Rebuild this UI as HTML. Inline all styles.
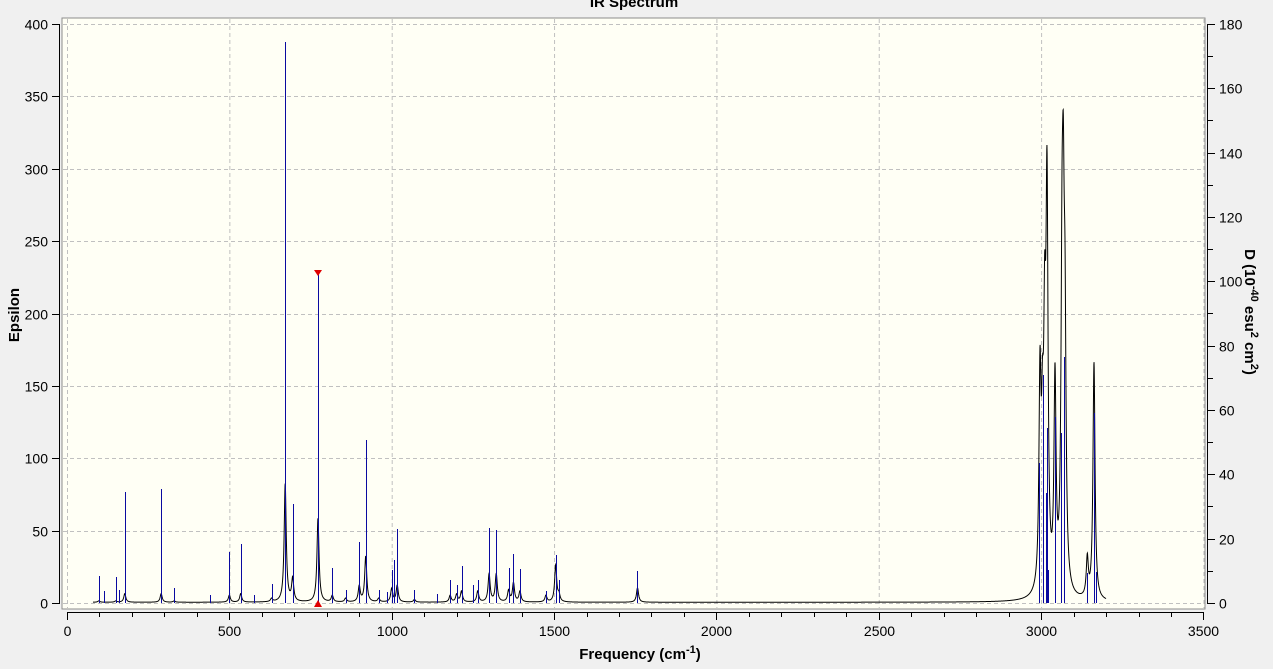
<!DOCTYPE html>
<html><head><meta charset="utf-8"><style>
html,body{margin:0;padding:0;background:#f0f0f0;width:1273px;height:669px;overflow:hidden}
svg{display:block}
text{font-family:"Liberation Sans",sans-serif;fill:#000}
</style></head><body>
<svg id="s" width="1273" height="669" xmlns="http://www.w3.org/2000/svg">
<rect x="62" y="18" width="1143" height="591" fill="#fffff5" stroke="#8c8c8c" stroke-width="1"/>
<g id="grid" stroke="#c0c0c0" stroke-dasharray="4,3" stroke-width="1"></g>
<g id="axes" stroke="#000" stroke-width="1"></g>
<g id="lbl" font-size="14"></g>
<path id="curve" fill="none" stroke="#000" stroke-width="1"/>
<g id="sticks" stroke="#0a0aa0" stroke-width="1"></g>
<polygon points="314,270 322,270 318,276" fill="#e00000"/>
<polygon points="314,607 322,607 318,600" fill="#e00000"/>
<text x="634" y="7" font-size="15" font-weight="bold" text-anchor="middle">IR Spectrum</text>
<text x="640" y="659" font-size="15" font-weight="bold" text-anchor="middle">Frequency (cm<tspan dy="-6" font-size="11">-1</tspan><tspan dy="6">)</tspan></text>
<text transform="translate(19,315) rotate(-90)" font-size="15" font-weight="bold" text-anchor="middle">Epsilon</text>
<text transform="translate(1245,312) rotate(90)" font-size="15" font-weight="bold" text-anchor="middle">D (10<tspan dy="-6" font-size="11">-40</tspan><tspan dy="6"> esu</tspan><tspan dy="-6" font-size="11">2</tspan><tspan dy="6"> cm</tspan><tspan dy="-6" font-size="11">2</tspan><tspan dy="6">)</tspan></text>
</svg>
<script>
var NS="http://www.w3.org/2000/svg";
function X(f){return 67+f*0.3247;}
function F(x){return (x-67)/0.3247;}
function Y(e){return 603-e*1.4475;}
function el(p,t,a,txt){var e=document.createElementNS(NS,t);for(var k in a)e.setAttribute(k,a[k]);if(txt!=null)e.textContent=txt;document.getElementById(p).appendChild(e);return e;}
for(var f=0;f<=3500;f+=500){var x=X(f)+0.5;el("grid","line",{x1:x,y1:19,x2:x,y2:608});}
for(var v=0;v<=400;v+=50){var y=Math.round(Y(v))+0.5;el("grid","line",{x1:63,y1:y,x2:1204,y2:y});}
el("axes","line",{x1:59.5,y1:24,x2:59.5,y2:604});
for(var v=0;v<=400;v+=50){var y=Math.round(Y(v))+0.5;el("axes","line",{x1:52,y1:y,x2:60,y2:y});el("lbl","text",{x:48,y:y+5,"text-anchor":"end"},String(v));}
el("axes","line",{x1:67,y1:612.5,x2:1204,y2:612.5});
for(var f=0;f<=3500;f+=100){var x=Math.round(X(f))+0.5;el("axes","line",{x1:x,y1:612,x2:x,y2:(f%500==0?620:617)});if(f%500==0)el("lbl","text",{x:x,y:636,"text-anchor":"middle"},String(f));}
el("axes","line",{x1:1207.5,y1:24,x2:1207.5,y2:604});
for(var d=0;d<=180;d+=10){var y=Math.round(603-d*3.217)+0.5;el("axes","line",{x1:1207,y1:y,x2:(d%20==0?1215:1213),y2:y});if(d%20==0)el("lbl","text",{x:1219,y:y+5},String(d));}
var st=[[98,576],[115,591],[150,577],[160,590],[178,492],[290,489],[330,588],[440,595],[500,552],[535,544],[575,595],[630,584],[672,42],[695,504],[773,272],[817,568],[858,590],[900,542],[920,440],[960,590],[985,592],[1000,570],[1008,560],[1017,529],[1070,590],[1140,594],[1180,580],[1200,585],[1215,566],[1250,585],[1265,580],[1300,528],[1322,530],[1360,568],[1375,554],[1395,569],[1475,591],[1505,555],[1515,580],[1757,571]];
var px=[[1039,463],[1043,375],[1046.3,493],[1047,428],[1048,570],[1055.3,417],[1060.7,433],[1064.3,357],[1087.3,573],[1094,413],[1096,572]];
px.forEach(function(p){st.push([F(p[0]),p[1]]);});
st.forEach(function(s){var x=Math.round(X(s[0]))+0.5;el("sticks","line",{x1:x,y1:s[1],x2:x,y2:603});});
var pk=[[98,1],[150,1],[178,6],[290,6],[330,1],[500,5],[535,6],[630,3],[672,82],[695,18],[773,58],[817,5],[858,3],[900,12],[920,32],[960,3],[1000,10],[1017,12],[1070,2],[1180,5],[1200,6],[1215,8],[1265,8],[1300,20],[1322,20],[1360,9],[1375,14],[1395,8],[1475,5],[1505,26],[1515,8],[1757,10]];
var cp=[[1040,177],[1042.5,170],[1044.7,242],[1047,315],[1055,166],[1062,300],[1063.3,338],[1065,250],[1087.3,34],[1094,166]];
cp.forEach(function(p){pk.push([F(p[0]),p[1]]);});
var g=3.8;
function L(f,c){var d=(f-c)/g;return 1/(1+d*d);}
var amp=pk.map(function(p){return p[1];});
for(var it=0;it<40;it++){var na=[];for(var i=0;i<pk.length;i++){var o=0;for(var j=0;j<pk.length;j++)if(j!=i)o+=amp[j]*L(pk[i][0],pk[j][0]);na.push(Math.max(0.3,pk[i][1]-o));}amp=na;}
var pts=[];
for(var f=80;f<=3200;f+=0.5){var s=0;for(var i=0;i<pk.length;i++)s+=amp[i]*L(f,pk[i][0]);pts.push((pts.length?"L":"M")+X(f).toFixed(2)+","+Y(s+0.5).toFixed(2));}
document.getElementById("curve").setAttribute("d",pts.join(""));
</script>
</body></html>
